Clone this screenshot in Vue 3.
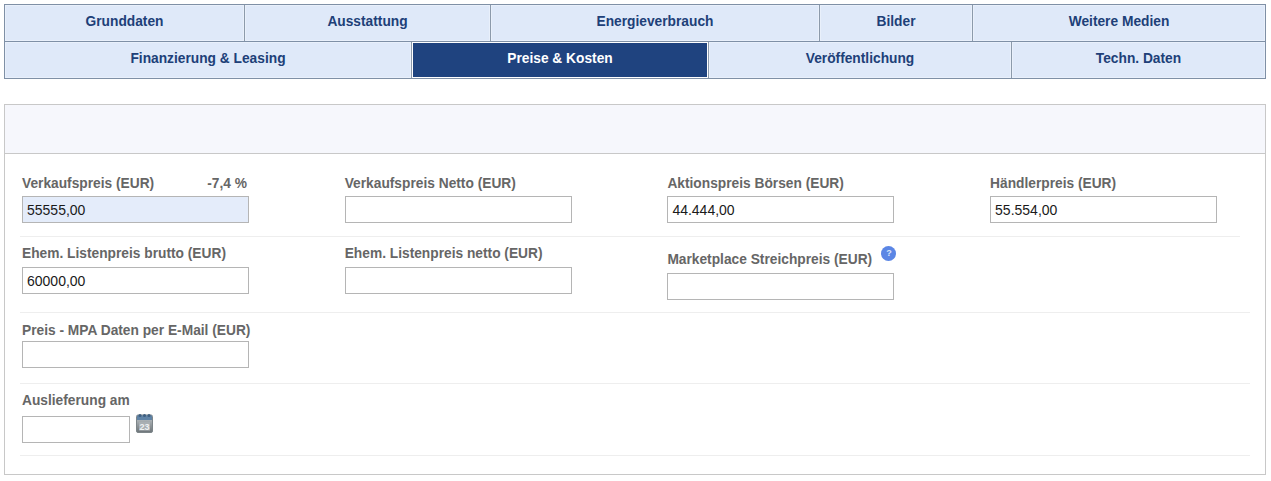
<script setup>
const row1 = [
  { t: 'Grunddaten', w: 239 },
  { t: 'Ausstattung', w: 246 },
  { t: 'Energieverbrauch', w: 329 },
  { t: 'Bilder', w: 153 },
  { t: 'Weitere Medien', w: 293 },
]
const row2 = [
  { t: 'Finanzierung & Leasing', w: 406 },
  { t: 'Preise & Kosten', w: 297, active: true },
  { t: 'Veröffentlichung', w: 303 },
  { t: 'Techn. Daten', w: 254 },
]
</script>

<template>
  <div class="page">
    <div class="tabs">
      <div class="tabrow">
        <div v-for="x in row1" :key="x.t" class="tab" :style="{ width: x.w + 'px' }">{{ x.t }}</div>
      </div>
      <div class="tabrow">
        <div v-for="x in row2" :key="x.t" class="tab" :class="{ active: x.active }" :style="{ width: x.w + 'px' }">{{ x.t }}</div>
      </div>
    </div>
    <div class="panel">
      <div class="head"></div>
      <div class="body">
        <div class="row r1">
          <div class="f">
            <div class="lbl"><span>Verkaufspreis (EUR)</span><span class="pct">-7,4 %</span></div>
            <input class="inp hl" value="55555,00" />
          </div>
          <div class="f"><div class="lbl">Verkaufspreis Netto (EUR)</div><input class="inp" /></div>
          <div class="f"><div class="lbl">Aktionspreis Börsen (EUR)</div><input class="inp" value="44.444,00" /></div>
          <div class="f"><div class="lbl">Händlerpreis (EUR)</div><input class="inp" value="55.554,00" /></div>
        </div>
        <div class="row r2">
          <div class="f"><div class="lbl">Ehem. Listenpreis brutto (EUR)</div><input class="inp" value="60000,00" /></div>
          <div class="f"><div class="lbl">Ehem. Listenpreis netto (EUR)</div><input class="inp" /></div>
          <div class="f">
            <div class="lbl tall">Marketplace Streichpreis (EUR)<span class="help">?</span></div>
            <input class="inp" />
          </div>
        </div>
        <div class="row r3">
          <div class="f"><div class="lbl short-lbl">Preis - MPA Daten per E-Mail (EUR)</div><input class="inp" /></div>
        </div>
        <div class="row r4">
          <div class="f">
            <div class="lbl date-lbl">Auslieferung am</div>
            <div class="date">
              <input class="inp short" />
              <svg class="cal" width="17" height="20" viewBox="0 0 17 20">
                <defs>
                  <linearGradient id="calbody" x1="0" y1="0" x2="0" y2="1">
                    <stop offset="0" stop-color="#c4cace" />
                    <stop offset="1" stop-color="#6d7478" />
                  </linearGradient>
                </defs>
                <rect x="0.5" y="2" width="16" height="17.5" rx="1.5" fill="url(#calbody)" stroke="#7d8589" />
                <rect x="1" y="2.5" width="15" height="4.5" fill="#5f83a6" />
                <circle cx="4" cy="2.5" r="1.6" fill="#3f5f80" />
                <circle cx="8.5" cy="2.5" r="1.6" fill="#3f5f80" />
                <circle cx="13" cy="2.5" r="1.6" fill="#3f5f80" />
                <rect x="3" y="9" width="11" height="8.5" fill="#a9afb3" />
                <text x="8.5" y="16.8" text-anchor="middle" class="caltext">23</text>
              </svg>
            </div>
          </div>
        </div>
      </div>
    </div>
  </div>
</template>

<style>
html, body { margin: 0; background: #fff; }
</style>

<style scoped>
.page { width: 1271px; height: 481px; overflow: hidden; box-sizing: border-box; padding: 4px 4px 0; font-family: "Liberation Sans", Arial, sans-serif; font-size: 13.75px; }
.tabs { width: 1262px; box-sizing: border-box; border: 1px solid #7f90a6; }
.tabrow { display: flex; height: 36px; }
.tabrow:first-child { box-sizing: border-box; height: 37px; border-bottom: 1px solid #7f90a6; }
.tab { box-sizing: border-box; height: 36px; background: #dfe9f9; border-left: 1px solid #8c9aab; box-shadow: inset 0 0 0 1px #e9f0fb; color: #203f78; font-weight: 700; font-size: 13.75px; display: flex; align-items: center; justify-content: center; padding-bottom: 3px; }
.tab:first-child { border-left: 0; }
.tab.active { background: #1f437f; color: #fff; box-shadow: inset 0 0 0 1px #fff; }
.panel { margin-top: 25px; width: 1262px; height: 371px; box-sizing: border-box; border: 1px solid #c8c8c8; }
.head { height: 48px; background: #f6f7fc; border-bottom: 1px solid #c8c8c8; }
.body { padding: 0 15px; }
.row { display: flex; border-bottom: 1px solid #eeeeee; box-sizing: border-box; padding-left: 2px; }
.r1 { height: 83px; padding-top: 21px; margin-right: 10px; }
.r2 { height: 76px; padding-top: 8px; }
.r3 { height: 71px; padding-top: 9px; }
.r4 { height: 72px; padding-top: 8px; }
.f { width: 322.7px; flex: none; }
.lbl { width: 227px; height: 21px; display: flex; justify-content: space-between; color: #666; font-weight: 700; font-size: 13.75px; line-height: 17px; white-space: nowrap; }
.r2 .lbl { height: 22px; }
.r2 .lbl.tall { height: 28px; padding-top: 6px; box-sizing: border-box; justify-content: flex-start; position: relative; }
.lbl.short-lbl { height: 19px; }
.lbl.date-lbl { height: 24px; }
.pct { padding-right: 2px; }
.inp { display: block; box-sizing: border-box; width: 227px; height: 27px; border: 1px solid #b5b5b5; padding: 0 4px; font: 14px "Liberation Sans", Arial, sans-serif; color: #1a1a1a; background: #fff; outline: none; }
.inp.hl { background: #e4ecfa; }
.inp.short { width: 108px; }
.date { display: flex; align-items: flex-start; gap: 6px; }
.cal { margin-top: -3px; }
.caltext { font: 700 9px "Liberation Sans", Arial, sans-serif; fill: #eef0f1; }
.help { position: absolute; left: 214px; top: 1px; width: 15px; height: 15px; border-radius: 50%; background: #5b86e5; color: #dbe6fb; font-size: 9px; line-height: 15px; text-align: center; }
</style>
